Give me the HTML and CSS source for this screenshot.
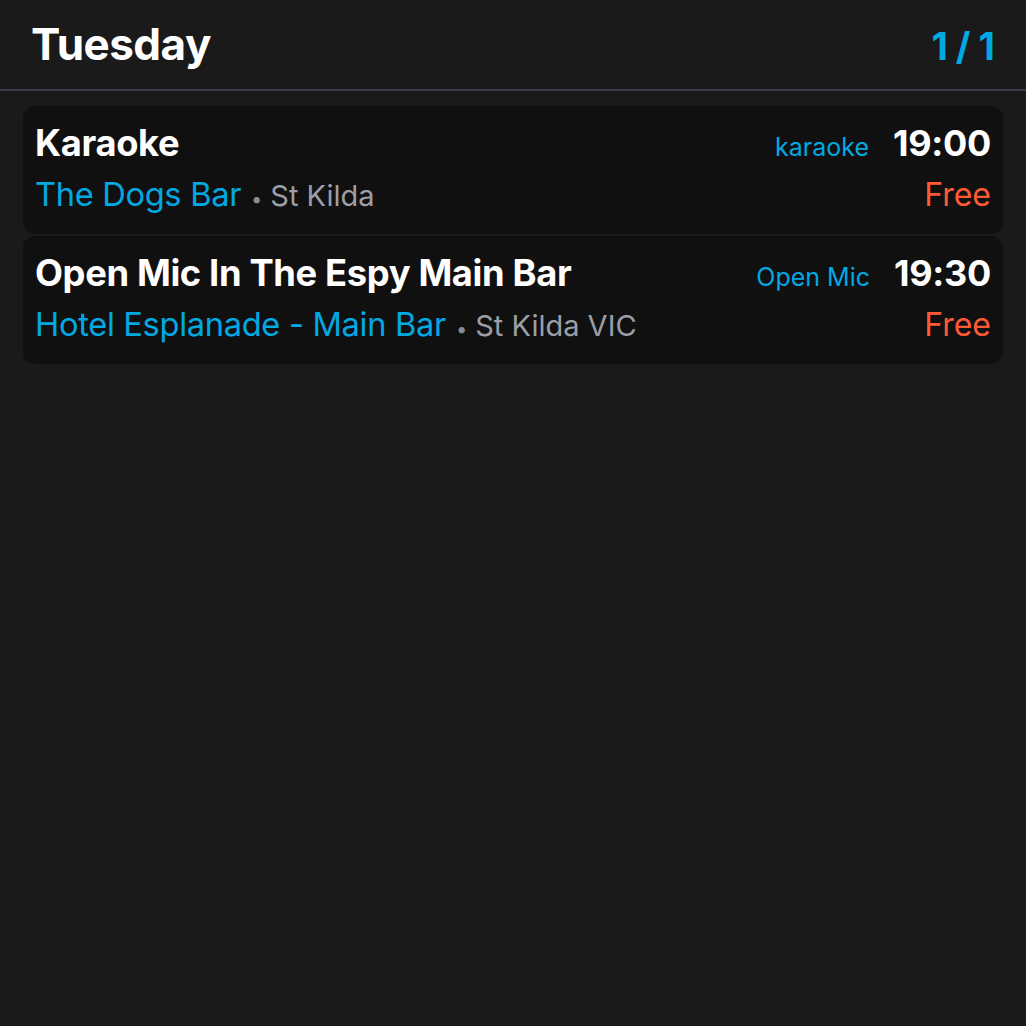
FILE: index.html
```html
<!DOCTYPE html>
<html lang="en">
<head>
<meta charset="utf-8">
<title>Tuesday</title>
<link rel="stylesheet" href="styles.css">
</head>
<body>
<div class="app">
  <header class="header">
    <h1 class="day">Tuesday</h1>
    <div class="pager">1/1</div>
  </header>
  <main class="list">
    <article class="card">
      <div class="row">
        <div class="title">Karaoke</div>
        <div class="meta">
          <span class="tag">karaoke</span>
          <span class="time">19:00</span>
        </div>
      </div>
      <div class="row">
        <div class="venue"><span class="venue-name">The Dogs Bar</span><span class="dot">•</span><span class="place">St Kilda</span></div>
        <div class="price">Free</div>
      </div>
    </article>
    <article class="card">
      <div class="row">
        <div class="title">Open Mic In The Espy Main Bar</div>
        <div class="meta">
          <span class="tag">Open Mic</span>
          <span class="time">19:30</span>
        </div>
      </div>
      <div class="row">
        <div class="venue"><span class="venue-name">Hotel Esplanade - Main Bar</span><span class="dot">•</span><span class="place">St Kilda VIC</span></div>
        <div class="price">Free</div>
      </div>
    </article>
  </main>
</div>
</body>
</html>
```

FILE: styles.css
```css
html, body {
  margin: 0;
  padding: 0;
  background: #1a1a1a;
  height: 100%;
}
body {
  font-family: Inter, "Noto Sans", "Liberation Sans", sans-serif;
  color: #ffffff;
}
.app {
  min-height: 100%;
}
.header {
  display: flex;
  justify-content: space-between;
  align-items: baseline;
  height: 91px;
  padding: 0 31px;
  box-sizing: border-box;
  border-bottom: 2px solid #3a3e48;
}
.day {
  margin: 0;
  font-size: 44px;
  font-weight: 700;
  line-height: 89px;
  letter-spacing: -0.5px;
}
.pager {
  font-size: 38px;
  font-weight: 700;
  color: #00a9e2;
  letter-spacing: 8px;
  margin-right: -8px;
}
.list {
  display: flex;
  flex-direction: column;
  gap: 2px;
  padding: 15px 23px;
}
.card {
  background: #101010;
  border-radius: 12px;
  height: 128px;
  box-sizing: border-box;
  padding: 14px 12px 16px;
  display: flex;
  flex-direction: column;
  gap: 5px;
}
.row {
  display: flex;
  justify-content: space-between;
  align-items: baseline;
  line-height: 46px;
  height: 46px;
}
.title {
  font-size: 36.3px;
  font-weight: 700;
  letter-spacing: -0.35px;
}
.meta {
  display: flex;
  align-items: baseline;
  gap: 24px;
  height: 46px;
}
.tag {
  font-size: 25px;
  color: #00a9e2;
}
.time {
  font-size: 36px;
  font-weight: 700;
  letter-spacing: -0.3px;
}
.venue {
  display: flex;
  align-items: baseline;
}
.venue-name {
  font-size: 32.6px;
  color: #00a9e2;
  letter-spacing: -0.3px;
}
.dot {
  font-size: 20px;
  color: #8a8d96;
  margin: 0 8px 0 10px;
}
.place {
  font-size: 29px;
  color: #9b9ea8;
}
.price {
  font-size: 32px;
  color: #ff5a36;
}
```
